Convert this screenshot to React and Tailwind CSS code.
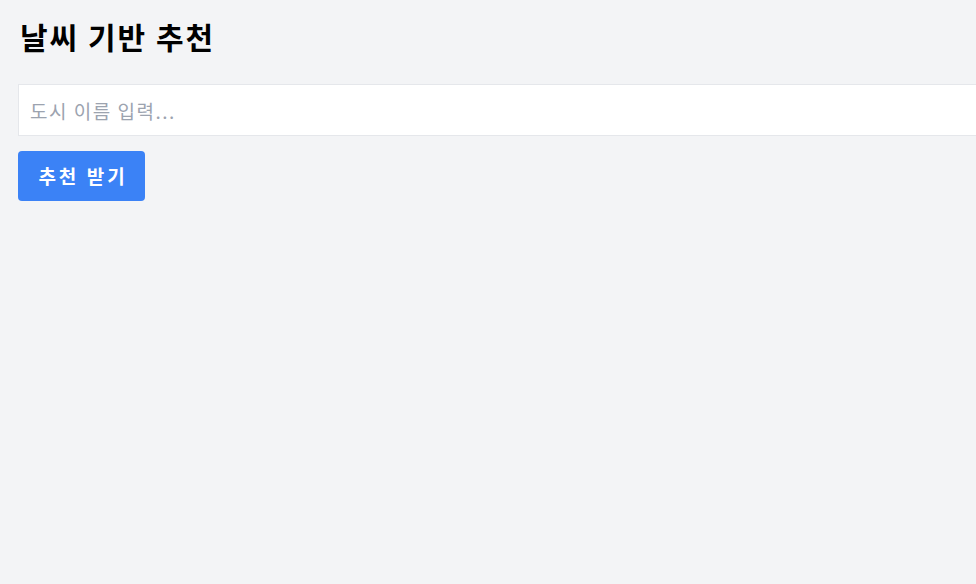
export default function App() {
  return (
    <div className="min-h-[584px] w-full overflow-hidden bg-[#f3f4f6] px-[18px] pt-[12px]" style={{ fontFamily: '"Noto Sans CJK KR", "Noto Sans", sans-serif' }}>
      <h1 className="pl-[2px] text-[30px] font-bold leading-[48px] tracking-[2px] text-black">날씨 기반 추천</h1>
      <input
        type="text"
        placeholder="도시 이름 입력..."
        className="mt-[24px] block h-[52px] w-[1100px] border border-[#e5e7eb] bg-white px-[11px] text-[19px] tracking-[1.5px] text-black placeholder:text-[#9ca3af] outline-none"
      />
      <button className="mt-[15px] flex h-[50px] w-[127px] items-center justify-center rounded-[4px] bg-[#3b82f6] pl-[3px] text-[19px] font-bold tracking-[3px] text-white">
        추천 받기
      </button>
    </div>
  );
}
